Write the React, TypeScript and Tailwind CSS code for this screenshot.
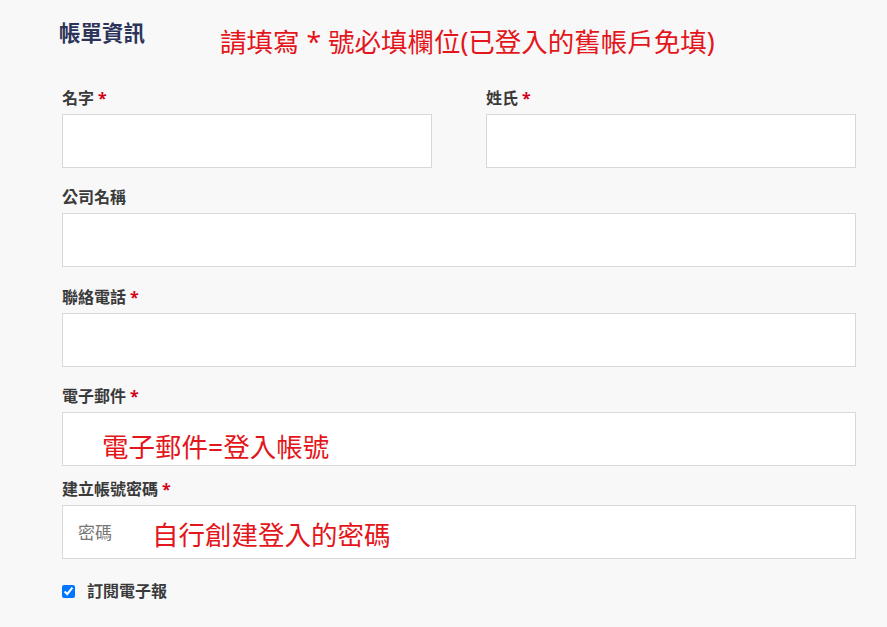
import React from 'react'

const font = { fontFamily: '"Noto Sans", "Noto Sans CJK TC", sans-serif' }

function Label({ text, required }: { text: string; required?: boolean }) {
  return (
    <label className="block h-5 text-[16px] leading-5 font-bold text-[#3a3a3a] mb-[6px]">
      {text}
      {required && <span className="text-[#d0021b] ml-1">*</span>}
    </label>
  )
}

function Field({
  label,
  required,
  placeholder,
  children,
  type = 'text',
}: {
  label: string
  required?: boolean
  placeholder?: string
  children?: React.ReactNode
  type?: string
}) {
  return (
    <div>
      <Label text={label} required={required} />
      <div className="relative">
        <input
          type={type}
          placeholder={placeholder}
          className="block w-full h-[54px] bg-white border border-[#d8d8d8] px-[15px] text-[17px] text-[#333] placeholder:text-[#777] outline-none"
        />
        {children}
      </div>
    </div>
  )
}

export default function App() {
  return (
    <div className="w-[887px] h-[627px] bg-[#f8f8f9] pl-[62px] overflow-hidden" style={font}>
      <div className="flex items-start h-[88px]">
        <h2 className="mt-[22px] -ml-[3px] text-[21.5px] leading-none font-bold text-[#2c3559]">帳單資訊</h2>
        <p className="mt-[29px] ml-[75px] text-[26.5px] leading-none text-[#e3161b] whitespace-nowrap">
          請填寫 * 號必填欄位(已登入的舊帳戶免填)
        </p>
      </div>

      <div className="w-[794px]">
        <div className="grid grid-cols-2 gap-x-[54px]">
          <Field label="名字" required />
          <Field label="姓氏" required />
        </div>

        <div className="mt-[19px]">
          <Field label="公司名稱" />
        </div>

        <div className="mt-[20px]">
          <Field label="聯絡電話" required />
        </div>

        <div className="mt-[19px]">
          <Field label="電子郵件" required type="email">
            <span className="absolute left-[40px] top-[22px] text-[26.5px] leading-none text-[#e3161b] pointer-events-none">
              電子郵件=登入帳號
            </span>
          </Field>
        </div>

        <div className="mt-[13px]">
          <Field label="建立帳號密碼" required placeholder="密碼" type="password">
            <span className="absolute left-[90px] top-[17px] text-[26.5px] leading-none text-[#e3161b] pointer-events-none">
              自行創建登入的密碼
            </span>
          </Field>
        </div>

        <label className="flex items-center h-5 mt-[22px] text-[16px] font-bold text-[#3a3a3a]">
          <input type="checkbox" defaultChecked className="w-[13px] h-[13px] m-0 mr-[12px]" />
          訂閱電子報
        </label>
      </div>
    </div>
  )
}
